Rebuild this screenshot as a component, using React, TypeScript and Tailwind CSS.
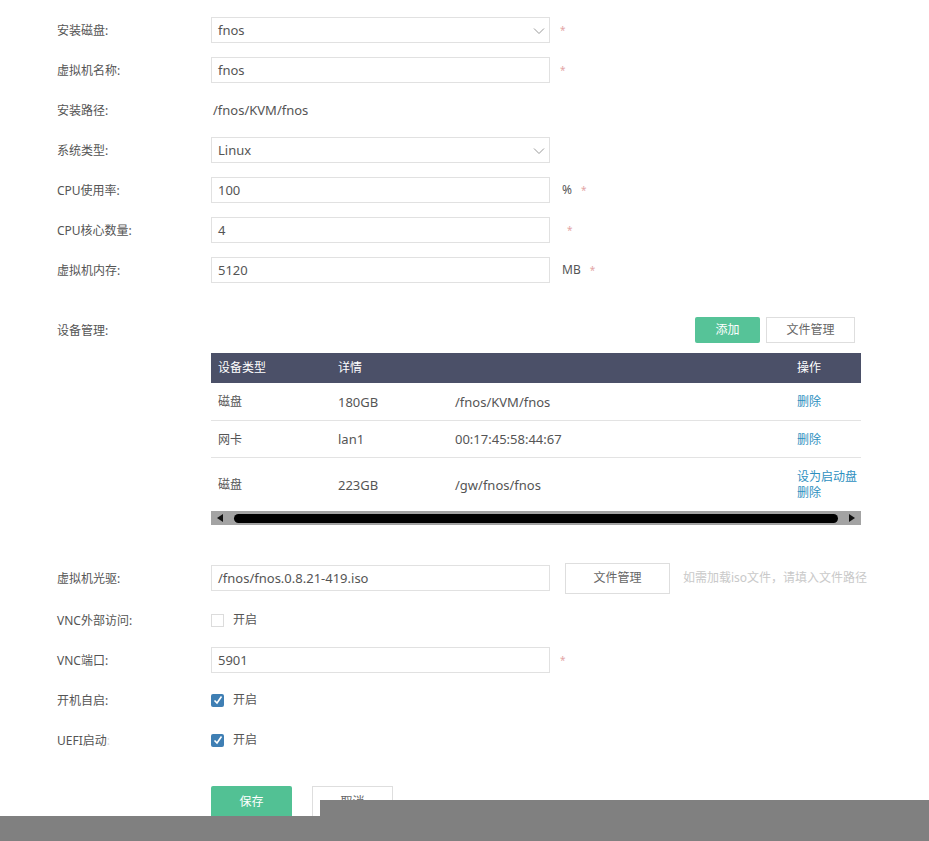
import type { ReactNode } from 'react'

const FONT = { fontFamily: '"Noto Sans", "Noto Sans CJK SC", sans-serif' }

function Label({ children }: { children: ReactNode }) {
  return <div className="w-[211px] shrink-0 pl-[57px] pt-[1px] text-[12px] text-[#555]">{children}</div>
}

function Req({ className = 'ml-[10px]' }: { className?: string }) {
  return <span className={`${className} text-[10px] text-[#e3a5a5]`}>*</span>
}

function Chevron() {
  return (
    <svg width="12" height="8" viewBox="0 0 12 8" className="absolute right-[4px] top-[9px]">
      <path d="M1 1.5 L6 6.5 L11 1.5" fill="none" stroke="#9a9a9a" strokeWidth="1" />
    </svg>
  )
}

function Field({ value, select }: { value: string; select?: boolean }) {
  return (
    <div className="relative flex h-[26px] w-[339px] items-center border border-[#e1e1e1] bg-white pl-[6px] pt-[1px] text-[13px] text-[#555]">
      {value}
      {select && <Chevron />}
    </div>
  )
}

function Check({ checked }: { checked?: boolean }) {
  if (!checked) {
    return <span className="h-[13px] w-[13px] border border-[#dcdcdc] bg-white" />
  }
  return (
    <span className="flex h-[13px] w-[13px] items-center justify-center rounded-[2px] bg-[#3f7fb4]">
      <svg width="10" height="10" viewBox="0 0 10 10">
        <path d="M1.5 5.5 L4 8 L8.5 1.5" fill="none" stroke="#fff" strokeWidth="1.6" />
      </svg>
    </span>
  )
}

const devices = [
  { type: '磁盘', size: '180GB', path: '/fnos/KVM/fnos', ops: ['删除'] },
  { type: '网卡', size: 'lan1', path: '00:17:45:58:44:67', ops: ['删除'] },
  { type: '磁盘', size: '223GB', path: '/gw/fnos/fnos', ops: ['设为启动盘', '删除'] },
]

export default function App() {
  return (
    <div style={FONT} className="relative h-[841px] w-[929px] overflow-hidden bg-white">
      <div className="flex flex-col pt-[10px]">
        <div className="flex h-10 items-center">
          <Label>安装磁盘:</Label>
          <Field value="fnos" select />
          <Req />
        </div>
        <div className="flex h-10 items-center">
          <Label>虚拟机名称:</Label>
          <Field value="fnos" />
          <Req />
        </div>
        <div className="flex h-10 items-center">
          <Label>安装路径:</Label>
          <span className="pl-[2px] pt-[1px] text-[13px] text-[#555]">/fnos/KVM/fnos</span>
        </div>
        <div className="flex h-10 items-center">
          <Label>系统类型:</Label>
          <Field value="Linux" select />
        </div>
        <div className="flex h-10 items-center">
          <Label>CPU使用率:</Label>
          <Field value="100" />
          <span className="ml-[12px] text-[12px] text-[#555]">%</span>
          <Req className="ml-[9px]" />
        </div>
        <div className="flex h-10 items-center">
          <Label>CPU核心数量:</Label>
          <Field value="4" />
          <Req className="ml-[17px]" />
        </div>
        <div className="flex h-10 items-center">
          <Label>虚拟机内存:</Label>
          <Field value="5120" />
          <span className="ml-[12px] text-[12px] text-[#555]">MB</span>
          <Req className="ml-[9px]" />
        </div>

        <div className="mt-[20px] flex h-10 items-center">
          <Label>设备管理:</Label>
          <div className="flex flex-1 justify-end gap-[6px] pr-[74px]">
            <button className="h-[26px] w-[65px] rounded-[2px] bg-[#56c398] text-[12px] text-white">添加</button>
            <button className="h-[26px] w-[89px] border border-[#dedede] bg-white text-[12px] text-[#666]">文件管理</button>
          </div>
        </div>

        <div className="ml-[211px] mt-[3px] w-[650px]">
          <table className="w-full border-collapse text-left text-[12px] text-[#555]">
            <thead>
              <tr className="h-[30px] bg-[#4b5068] text-white">
                <th className="w-[120px] pl-[7px] font-normal">设备类型</th>
                <th className="w-[117px] pl-[7px] font-normal">详情</th>
                <th className="font-normal" />
                <th className="w-[64px] font-normal">操作</th>
              </tr>
            </thead>
            <tbody>
              {devices.map((d, i) => (
                <tr key={i} className={`${i === 2 ? 'h-[54px]' : 'h-[37px] border-b border-[#e3e3e3]'}`}>
                  <td className="pl-[7px] pt-[2px]">{d.type}</td>
                  <td className="pl-[7px] pt-[2px] text-[13px]">{d.size}</td>
                  <td className="pl-[7px] pt-[2px] text-[13px]">{d.path}</td>
                  <td className="pt-[2px] leading-[16px] text-[#2d8fc0]">
                    {d.ops.map((o) => (
                      <div key={o}>{o}</div>
                    ))}
                  </td>
                </tr>
              ))}
            </tbody>
          </table>
          <div className="flex h-[14px] items-center bg-[#a3a3a3] px-[6px]">
            <svg width="7" height="8" viewBox="0 0 7 8">
              <path d="M6 0 L0 4 L6 8 Z" fill="#111" />
            </svg>
            <div className="ml-[10px] mr-[10px] h-[9px] flex-1 rounded-full bg-black" />
            <svg width="7" height="8" viewBox="0 0 7 8">
              <path d="M1 0 L7 4 L1 8 Z" fill="#111" />
            </svg>
          </div>
        </div>

        <div className="mt-[31px] flex h-[44px] items-center">
          <Label>虚拟机光驱:</Label>
          <Field value="/fnos/fnos.0.8.21-419.iso" />
          <button className="ml-[15px] h-[31px] w-[105px] border border-[#dedede] bg-white text-[12px] text-[#666]">文件管理</button>
          <span className="ml-[13px] text-[12px] text-[#c9c9c9]">如需加载iso文件，请填入文件路径</span>
        </div>
        <div className="flex h-10 items-center">
          <Label>VNC外部访问:</Label>
          <Check />
          <span className="ml-[9px] text-[12px] text-[#555]">开启</span>
        </div>
        <div className="flex h-10 items-center">
          <Label>VNC端口:</Label>
          <Field value="5901" />
          <Req />
        </div>
        <div className="flex h-10 items-center">
          <Label>开机自启:</Label>
          <Check checked />
          <span className="ml-[9px] text-[12px] text-[#555]">开启</span>
        </div>
        <div className="flex h-10 items-center">
          <Label>
            UEFI启动<span className="text-[#ddd]">:</span>
          </Label>
          <Check checked />
          <span className="ml-[9px] text-[12px] text-[#555]">开启</span>
        </div>

        <div className="ml-[211px] mt-[26px] flex gap-[20px]">
          <button className="h-[32px] w-[81px] rounded-[2px] bg-[#52c194] text-[12px] text-white">保存</button>
          <button className="h-[32px] w-[81px] border border-[#dedede] bg-white text-[12px] text-[#666]">取消</button>
        </div>
      </div>

      <div className="absolute bottom-0 left-[320px] right-0 top-[800px] bg-[#808080]" />
      <div className="absolute bottom-0 left-0 top-[816px] w-[320px] bg-[#808080]" />
    </div>
  )
}
